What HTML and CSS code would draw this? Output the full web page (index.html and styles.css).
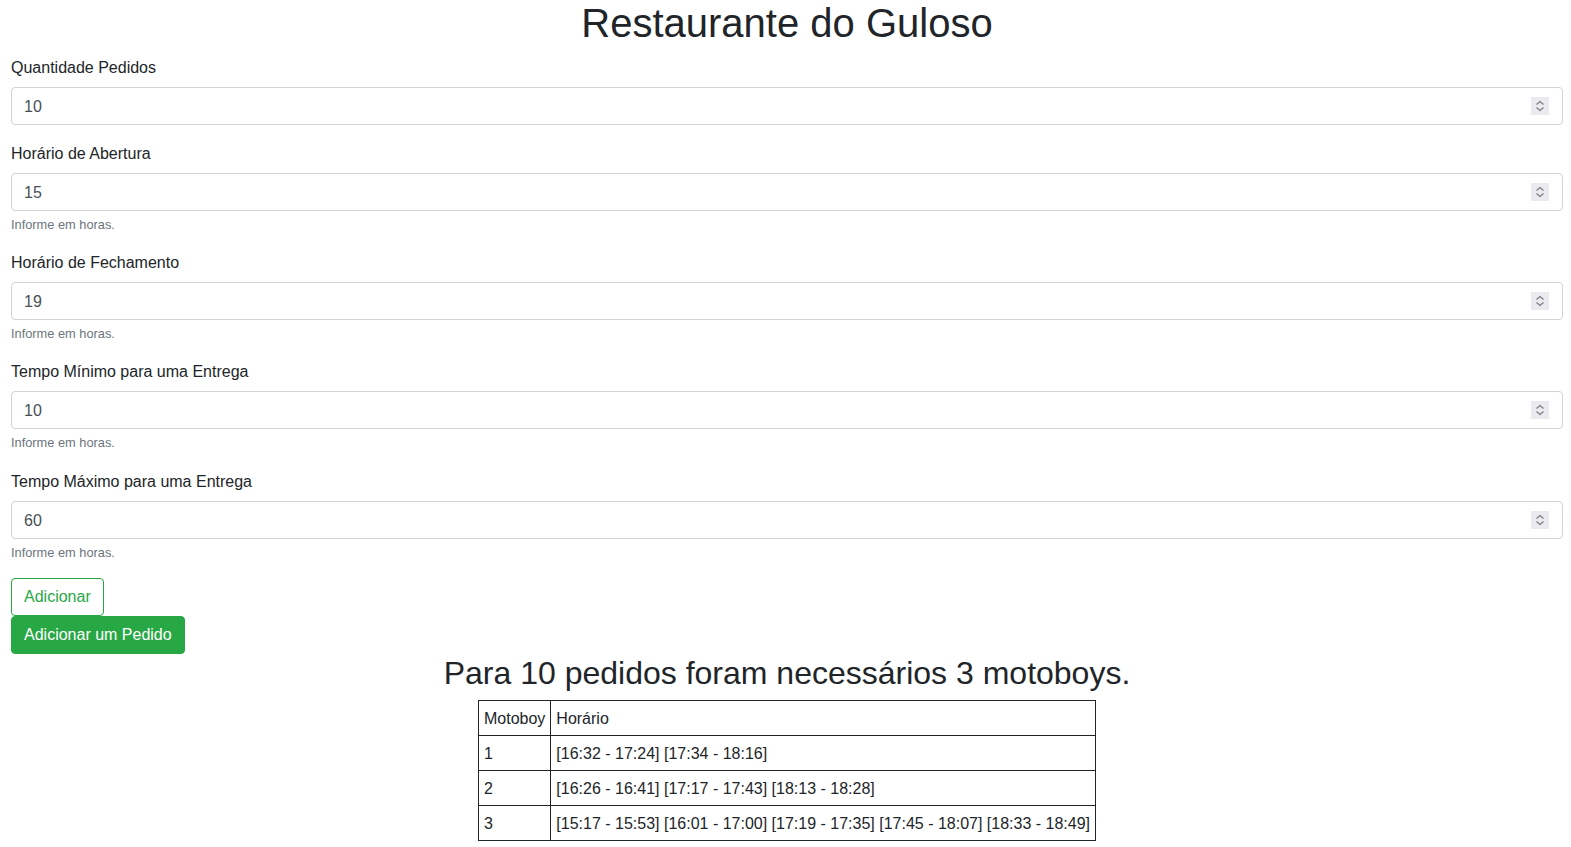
FILE: index.html
```html
<!DOCTYPE html>
<html lang="pt">
<head>
<meta charset="utf-8">
<title>Restaurante do Guloso</title>
<link rel="stylesheet" href="styles.css">
</head>
<body>
<div class="page">
  <h1 class="title">Restaurante do Guloso</h1>
  <form class="form">
    <div class="group">
      <label class="label">Quantidade Pedidos</label>
      <div class="field">
        <input class="control" type="number" value="10">
        <svg class="spin" width="18" height="18" viewBox="0 0 18 18"><rect width="18" height="18" fill="#ebebef"/><path d="M5.5 7.5 L9 4.5 L12.5 7.5 M5.5 10.5 L9 13.5 L12.5 10.5" fill="none" stroke="#7a7a80" stroke-width="1.2"/></svg>
      </div>
    </div>
    <div class="group">
      <label class="label">Horário de Abertura</label>
      <div class="field">
        <input class="control" type="number" value="15">
        <svg class="spin" width="18" height="18" viewBox="0 0 18 18"><rect width="18" height="18" fill="#ebebef"/><path d="M5.5 7.5 L9 4.5 L12.5 7.5 M5.5 10.5 L9 13.5 L12.5 10.5" fill="none" stroke="#7a7a80" stroke-width="1.2"/></svg>
      </div>
      <small class="hint">Informe em horas.</small>
    </div>
    <div class="group">
      <label class="label">Horário de Fechamento</label>
      <div class="field">
        <input class="control" type="number" value="19">
        <svg class="spin" width="18" height="18" viewBox="0 0 18 18"><rect width="18" height="18" fill="#ebebef"/><path d="M5.5 7.5 L9 4.5 L12.5 7.5 M5.5 10.5 L9 13.5 L12.5 10.5" fill="none" stroke="#7a7a80" stroke-width="1.2"/></svg>
      </div>
      <small class="hint">Informe em horas.</small>
    </div>
    <div class="group">
      <label class="label">Tempo Mínimo para uma Entrega</label>
      <div class="field">
        <input class="control" type="number" value="10">
        <svg class="spin" width="18" height="18" viewBox="0 0 18 18"><rect width="18" height="18" fill="#ebebef"/><path d="M5.5 7.5 L9 4.5 L12.5 7.5 M5.5 10.5 L9 13.5 L12.5 10.5" fill="none" stroke="#7a7a80" stroke-width="1.2"/></svg>
      </div>
      <small class="hint">Informe em horas.</small>
    </div>
    <div class="group">
      <label class="label">Tempo Máximo para uma Entrega</label>
      <div class="field">
        <input class="control" type="number" value="60">
        <svg class="spin" width="18" height="18" viewBox="0 0 18 18"><rect width="18" height="18" fill="#ebebef"/><path d="M5.5 7.5 L9 4.5 L12.5 7.5 M5.5 10.5 L9 13.5 L12.5 10.5" fill="none" stroke="#7a7a80" stroke-width="1.2"/></svg>
      </div>
      <small class="hint">Informe em horas.</small>
    </div>
    <div class="buttons">
      <button type="button" class="btn btn-outline">Adicionar</button>
      <button type="button" class="btn btn-solid">Adicionar um Pedido</button>
    </div>
  </form>
  <h2 class="result">Para 10 pedidos foram necessários 3 motoboys.</h2>
  <table class="grid">
    <tr><td>Motoboy</td><td>Horário</td></tr>
    <tr><td>1</td><td>[16:32 - 17:24] [17:34 - 18:16]</td></tr>
    <tr><td>2</td><td>[16:26 - 16:41] [17:17 - 17:43] [18:13 - 18:28]</td></tr>
    <tr><td>3</td><td>[15:17 - 15:53] [16:01 - 17:00] [17:19 - 17:35] [17:45 - 18:07] [18:33 - 18:49]</td></tr>
  </table>
</div>
</body>
</html>
```

FILE: styles.css
```css
* { box-sizing: border-box; }
html, body { margin: 0; padding: 0; }
body {
  font-family: "Liberation Sans", Arial, sans-serif;
  font-size: 16px;
  line-height: 1.5;
  color: #212529;
  background: #fff;
}
.page { padding: 0 8px 0 11px; }
.title {
  margin: 0 0 9px;
  font-size: 40px;
  font-weight: 500;
  line-height: 46px;
  text-align: center;
}
.form { margin: 0; }
.group { margin-bottom: 16px; }
.label {
  display: block;
  padding-top: 1px;
  margin-bottom: 7px;
}
.field { position: relative; }
.control {
  display: block;
  width: 100%;
  height: 38px;
  padding: 7px 12px 5px;
  font-family: inherit;
  font-size: 16px;
  line-height: 1.5;
  color: #495057;
  background: #fff;
  border: 1px solid #ced4da;
  border-radius: 4px;
  margin: 0;
  -moz-appearance: textfield;
}
.control::-webkit-inner-spin-button,
.control::-webkit-outer-spin-button { -webkit-appearance: none; margin: 0; }
.spin {
  position: absolute;
  right: 14px;
  top: 10px;
  display: block;
}
.hint {
  display: block;
  margin-top: 4px;
  font-size: 12.8px;
  line-height: 1.5;
  color: #6c757d;
}
.buttons { display: flex; flex-direction: column; align-items: flex-start; }
.btn {
  display: inline-block;
  font-family: inherit;
  font-size: 16px;
  line-height: 1.5;
  padding: 6px 12px;
  border: 1px solid #28a745;
  border-radius: 4px;
  margin: 0;
  cursor: pointer;
}
.btn-outline { color: #28a745; background: #fff; }
.btn-solid { color: #fff; background: #28a745; }
.result {
  margin: 0 0 8px;
  font-size: 32px;
  font-weight: 500;
  line-height: 1.2;
  text-align: center;
}
.grid {
  margin: 0 auto;
  border-collapse: collapse;
}
.grid td {
  border: 1px solid #212529;
  padding: 6px 5px 4px;
  line-height: 24px;
}
```
